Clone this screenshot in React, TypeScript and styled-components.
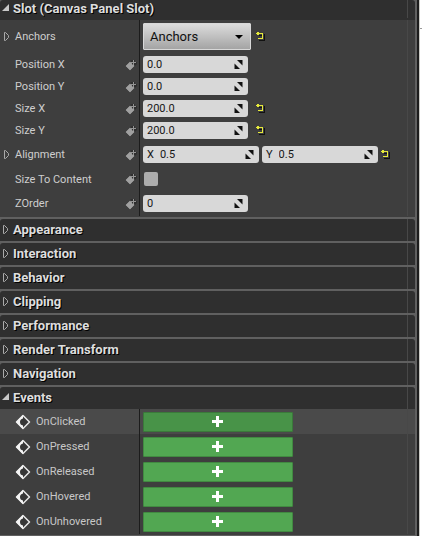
import React, { useState } from "react";
import styled, { createGlobalStyle } from "styled-components";

const GlobalStyle = createGlobalStyle`
  *, *::before, *::after { box-sizing: border-box; }
  body {
    margin: 0;
    background: #ffffff;
    font-family: Roboto, "Liberation Sans", sans-serif;
    font-size: 11px;
  }
  button, input { font: inherit; }
`;

const Page = styled.div`
  display: flex;
  min-height: 100vh;
`;

const Panel = styled.main`
  flex: 1;
  min-width: 0;
  background: #606060;
  border-right: 2px solid #606060;
`;

const WindowEdge = styled.div`
  width: 3px;
  background: #1c1c1c;
  border-right: 1px solid #c9c9c4;
`;

const Desktop = styled.div`
  width: 2px;
  padding-top: 28px;
`;

const Tick = styled.div`
  height: 1px;
  background: #9a9a9a;
`;

const Section = styled.section`
  background: #2f2f2f;
  border-radius: 3px 3px 0 0;
  overflow: hidden;
  margin-bottom: 2px;
`;

const SectionHeader = styled.button<{ $first?: boolean }>`
  display: grid;
  grid-template-columns: 13px 1fr 8px;
  align-items: center;
  width: 100%;
  height: ${(p) => (p.$first ? 20 : 22)}px;
  padding: 0 0 ${(p) => (p.$first ? 2 : 0)}px;
  border: 0;
  background: none;
  color: #dedede;
  font-size: 13px;
  font-weight: 700;
  line-height: 16px;
  text-align: left;
  text-shadow: 1px 1px 0 #000000;
`;

const Gutter = styled.span`
  align-self: stretch;
  border-left: 1px solid #484848;
`;

const Rows = styled.div`
  background: #3e3e3e;
  padding-bottom: 1px;
`;

const Row = styled.div<{ $height: number; $lit?: boolean }>`
  display: grid;
  grid-template-columns: 139px 1fr 8px;
  align-items: stretch;
  height: ${(p) => p.$height}px;
  background: ${(p) => (p.$lit ? "#4a4a4a" : "#3e3e3e")};
`;

const NameCell = styled.div<{ $spaced?: boolean }>`
  display: grid;
  grid-template-columns: 15px 1fr 14px;
  align-items: center;
  padding-bottom: ${(p) => (p.$spaced ? 1 : 0)}px;
  color: #cecece;
  line-height: 15px;
`;

const EventCell = styled.div`
  display: flex;
  align-items: center;
  gap: 5px;
  padding-left: 15px;
  color: #c8c8c8;
  line-height: 15px;
`;

const ValueCell = styled.div<{ $spaced?: boolean }>`
  display: flex;
  align-items: center;
  gap: 3px;
  padding-left: 3px;
  padding-bottom: ${(p) => (p.$spaced ? 1 : 0)}px;
  border-left: 1px solid #1c1c1c;
`;

const IconButton = styled.button`
  display: flex;
  padding: 0;
  border: 0;
  background: none;
`;

const ExpandButton = styled(IconButton)`
  padding-left: 1px;
`;

const BindButton = styled(IconButton)`
  grid-column: 3;
`;

const ResetButton = styled(IconButton)<{ $inset: number }>`
  margin-left: ${(p) => p.$inset}px;
`;

const AnchorsButton = styled.button`
  display: flex;
  align-items: center;
  justify-content: space-between;
  width: 108px;
  height: 27px;
  padding: 0 7px 0 6px;
  border: 1px solid #d8d8d8;
  border-radius: 1px;
  background: linear-gradient(#dcdcdc, #a4a4a4);
  color: #101010;
  font-size: 13px;
`;

const Field = styled.label<{ $wide?: boolean }>`
  display: flex;
  align-items: center;
  gap: 6px;
  width: ${(p) => (p.$wide ? 116 : 105)}px;
  height: 17px;
  padding: 0 5px 0 4px;
  border-radius: 3px;
  background: #d8d8d8;
  color: #161616;
`;

const FieldInput = styled.input`
  flex: 1;
  min-width: 0;
  height: 17px;
  padding: 0;
  border: 0;
  outline: 0;
  background: none;
  color: inherit;
`;

const CheckBox = styled.input`
  appearance: none;
  width: 14px;
  height: 14px;
  margin: 0 1px;
  border-radius: 2px;
  background: #adadad;
`;

const AddButton = styled.button<{ $lit?: boolean }>`
  display: flex;
  align-items: center;
  justify-content: center;
  width: 150px;
  height: 20px;
  padding: 0;
  border: 1px solid ${(p) => (p.$lit ? "#3a7a3a" : "#418a41")};
  border-radius: 1px;
  background: ${(p) => (p.$lit ? "#489348" : "#52a752")};
`;

const Expander = ({ open }: { open?: boolean }) =>
  open ? (
    <svg width="10" height="10" viewBox="0 0 10 10" aria-hidden="true">
      <path d="M9 0V7H2Z" fill="#c8c8c8" />
    </svg>
  ) : (
    <svg width="10" height="10" viewBox="0 0 10 10" aria-hidden="true">
      <path d="M3.5 .5V8.5H4.5L7.5 5.5V3.5L4.5 .5Z" fill="none" stroke="#aaaaaa" />
    </svg>
  );

const BindIcon = () => (
  <svg width="12" height="12" viewBox="0 0 12 12" aria-hidden="true">
    <path d="M0 7L5 2L7 1H10V3H12V5L10 7L5 12Z" fill="#2e2e2e" />
    <path d="M.5 7L5 2.5L7 4.5V5.5H8.5L9.5 7L5 11.5Z" fill="#a0a0a0" />
    <path d="M8.5 1V6M6 3.5H11" stroke="#949494" />
  </svg>
);

const ResetIcon = () => (
  <svg width="9" height="9" viewBox="0 0 9 9" aria-hidden="true" shapeRendering="crispEdges">
    <path d="M3 3H6M8 2V9M3 8H8" fill="none" stroke="#111111" />
    <path d="M0 1H1V0H3V1H7V7H2V6H6V2H3V3H1V2H0Z" fill="#e6ea3a" />
  </svg>
);

const SpinIcon = () => (
  <svg width="9" height="9" viewBox="0 0 9 9" aria-hidden="true">
    <path d="M3 0H8.5V5.5Z" fill="#111111" />
    <path d="M.5 3.5V9H6Z" fill="#111111" />
  </svg>
);

const EventIcon = () => (
  <svg width="16" height="16" viewBox="0 0 16 16" aria-hidden="true">
    <path d="M8 1.5L14.5 8L8 14.5L1.5 8Z" fill="#363636" stroke="#e8e8e8" strokeWidth="1.5" strokeLinejoin="round" />
    <path d="M8 1V4.5Q5 5 5 8T8 11.5V15L1 8Z" fill="#f4f4f4" />
  </svg>
);

const PlusIcon = () => (
  <svg width="12" height="12" viewBox="0 0 12 12" aria-hidden="true">
    <path d="M4 0H7V4H11V7H7V11H4V7H0V4H4Z" fill="#ffffff" />
  </svg>
);

type FieldData = { axis?: string; value: string };
type Property = {
  name: string;
  height: number;
  fields: FieldData[];
  changed?: boolean;
  spaced?: boolean;
};

const properties: Property[] = [
  { name: "Position X", height: 22, fields: [{ value: "0.0" }], spaced: true },
  { name: "Position Y", height: 22, fields: [{ value: "0.0" }], spaced: true },
  { name: "Size X", height: 22, fields: [{ value: "200.0" }], changed: true, spaced: true },
  { name: "Size Y", height: 22, fields: [{ value: "200.0" }], changed: true, spaced: true },
  { name: "Alignment", height: 25, fields: [{ axis: "X", value: "0.5" }, { axis: "Y", value: "0.5" }], changed: true },
];
const zOrder: Property = { name: "ZOrder", height: 25, fields: [{ value: "0" }] };

const closedSections = [
  "Appearance",
  "Interaction",
  "Behavior",
  "Clipping",
  "Performance",
  "Render Transform",
  "Navigation",
];
const events = ["OnClicked", "OnPressed", "OnReleased", "OnHovered", "OnUnhovered"];

const Header = ({ title, open, first }: { title: string; open?: boolean; first?: boolean }) => (
  <SectionHeader type="button" aria-expanded={!!open} $first={first}>
    <Expander open={open} />
    <span>{title}</span>
    <Gutter />
  </SectionHeader>
);

const Bind = ({ name }: { name: string }) => (
  <BindButton type="button" aria-label={`Bind ${name}`}>
    <BindIcon />
  </BindButton>
);

const PropertyRow = ({ name, height, fields, changed, spaced }: Property) => {
  const wide = fields.length > 1;
  return (
    <Row $height={height}>
      <NameCell $spaced={spaced}>
        {wide ? (
          <ExpandButton type="button" aria-label={`Expand ${name}`}>
            <Expander />
          </ExpandButton>
        ) : (
          <span />
        )}
        <span>{name}</span>
        <Bind name={name} />
      </NameCell>
      <ValueCell $spaced={spaced}>
        {fields.map((f) => (
          <Field key={f.axis ?? name} $wide={wide}>
            {f.axis && <span>{f.axis}</span>}
            <FieldInput aria-label={f.axis ? `${name} ${f.axis}` : name} defaultValue={f.value} />
            <SpinIcon />
          </Field>
        ))}
        {changed && (
          <ResetButton type="button" aria-label={`Reset ${name}`} $inset={wide ? 0 : 5}>
            <ResetIcon />
          </ResetButton>
        )}
      </ValueCell>
      <Gutter />
    </Row>
  );
};

export default function App() {
  const [sizeToContent, setSizeToContent] = useState(false);
  return (
    <>
      <GlobalStyle />
      <Page>
        <Panel>
          <Section>
            <Header title="Slot (Canvas Panel Slot)" open first />
            <Rows>
              <Row $height={34}>
                <NameCell $spaced>
                  <ExpandButton type="button" aria-label="Expand Anchors">
                    <Expander />
                  </ExpandButton>
                  <span>Anchors</span>
                </NameCell>
                <ValueCell $spaced>
                  <AnchorsButton type="button" aria-haspopup="menu">
                    <span>Anchors</span>
                    <svg width="8" height="4" viewBox="0 0 8 4" aria-hidden="true">
                      <path d="M0 0H8L4 4Z" fill="#000000" />
                    </svg>
                  </AnchorsButton>
                  <ResetButton type="button" aria-label="Reset Anchors" $inset={2}>
                    <ResetIcon />
                  </ResetButton>
                </ValueCell>
                <Gutter />
              </Row>
              {properties.map((p) => (
                <PropertyRow key={p.name} {...p} />
              ))}
              <Row $height={24}>
                <NameCell>
                  <span />
                  <label htmlFor="size-to-content">Size To Content</label>
                  <Bind name="Size To Content" />
                </NameCell>
                <ValueCell>
                  <CheckBox
                    id="size-to-content"
                    type="checkbox"
                    checked={sizeToContent}
                    onChange={(e) => setSizeToContent(e.target.checked)}
                  />
                </ValueCell>
                <Gutter />
              </Row>
              <PropertyRow {...zOrder} />
            </Rows>
          </Section>
          {closedSections.map((title) => (
            <Section key={title}>
              <Header title={title} />
            </Section>
          ))}
          <Section>
            <Header title="Events" open />
            <Rows>
              {events.map((name, i) => (
                <Row key={name} $height={25} $lit={i === 0}>
                  <EventCell>
                    <EventIcon />
                    <span>{name}</span>
                  </EventCell>
                  <ValueCell>
                    <AddButton type="button" aria-label={`Add ${name}`} $lit={i === 0}>
                      <PlusIcon />
                    </AddButton>
                  </ValueCell>
                  <Gutter />
                </Row>
              ))}
            </Rows>
          </Section>
        </Panel>
        <WindowEdge />
        <Desktop>
          <Tick />
        </Desktop>
      </Page>
    </>
  );
}
